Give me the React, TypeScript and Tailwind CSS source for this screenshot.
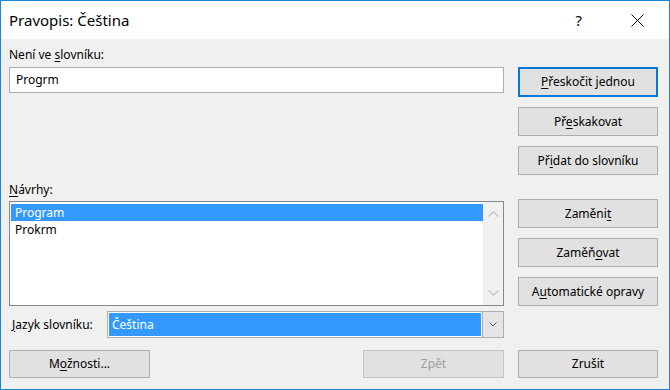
import React from "react";

function Btn({
  children,
  className = "",
  def = false,
  disabled = false,
}: {
  children: React.ReactNode;
  className?: string;
  def?: boolean;
  disabled?: boolean;
}) {
  return (
    <div
      className={
        "flex items-center justify-center bg-[#e1e1e1] " +
        (def
          ? "border-2 border-[#0078d7] "
          : disabled
          ? "border border-[#c6c6c6] text-[#a0a0a0] "
          : "border border-[#adadad] ") +
        className
      }
    >
      {children}
    </div>
  );
}

function U({ children }: { children: React.ReactNode }) {
  return <span className="underline underline-offset-[2px]">{children}</span>;
}

export default function App() {
  return (
    <div className="w-[670px] h-[390px] border border-[#1b86d8] bg-[#f0f0f0] flex flex-col text-[12px] text-black font-['Noto_Sans',sans-serif] overflow-hidden">
      {/* title bar */}
      <div className="h-[38px] bg-white flex items-center pl-[8px] shrink-0">
        <span className="text-[15px] text-black">Pravopis: Čeština</span>
        <span className="ml-auto text-[15px] text-black mr-[49px]">?</span>
        <svg width="13" height="13" viewBox="0 0 13 13" className="mr-[25px]">
          <path d="M0.5 0.5 L12.5 12.5 M12.5 0.5 L0.5 12.5" stroke="#000" strokeWidth="1" fill="none" />
        </svg>
      </div>

      {/* content */}
      <div className="flex flex-1 pl-[8px] pr-[11px] pb-[11px]">
        {/* left column */}
        <div className="w-[495px] flex flex-col">
          <div className="mt-[8px] h-[16px] leading-[16px]">
            Není ve <U>s</U>lovníku:
          </div>
          <div className="mt-[4px] h-[26px] bg-white border border-[#abadb3] flex items-center pl-[6px]">
            Progrm
          </div>
          <div className="mt-[89px] h-[16px] leading-[16px]">
            <U>N</U>ávrhy:
          </div>
          <div className="mt-[3px] h-[105px] bg-white border border-[#828790] flex">
            <div className="flex-1 flex flex-col pt-[2px] pl-[1px]">
              <div className="h-[17px] leading-[17px] bg-[#3399ff] text-white pl-[4px]">Program</div>
              <div className="h-[17px] leading-[17px] pl-[4px]">Prokrm</div>
            </div>
            <div className="w-[20px] bg-[#f0f0f0] flex flex-col items-center justify-between py-[9px]">
              <svg width="11" height="6" viewBox="0 0 11 6">
                <path d="M0.5 5.5 L5.5 0.8 L10.5 5.5" stroke="#c2c2c2" strokeWidth="1.3" fill="none" />
              </svg>
              <svg width="11" height="6" viewBox="0 0 11 6">
                <path d="M0.5 0.5 L5.5 5.2 L10.5 0.5" stroke="#c2c2c2" strokeWidth="1.3" fill="none" />
              </svg>
            </div>
          </div>
          <div className="mt-[5px] h-[27px] flex items-center">
            <div className="w-[98px] pl-[3px]">
              <U>J</U>azyk slovníku:
            </div>
            <div className="flex-1 h-full bg-white border border-[#adadad] flex">
              <div className="flex-1 m-[1px] bg-[#3399ff] text-white flex items-center pl-[3px]">Čeština</div>
              <div className="w-[21px] bg-[#e5e5e5] border-l border-[#adadad] flex items-center justify-center">
                <svg width="8" height="5" viewBox="0 0 8 5">
                  <path d="M0.5 0.5 L4 4 L7.5 0.5" stroke="#555" strokeWidth="1" fill="none" />
                </svg>
              </div>
            </div>
          </div>
          <div className="mt-auto h-[28px] flex justify-between">
            <Btn className="w-[141px]">
              <span>
                M<U>o</U>žnosti...
              </span>
            </Btn>
            <Btn className="w-[141px]" disabled>
              Zpět
            </Btn>
          </div>
        </div>

        {/* right column */}
        <div className="ml-[14px] w-[140px] flex flex-col">
          <Btn def className="mt-[28px] h-[30px]">
            <span>
              <U>P</U>řeskočit jednou
            </span>
          </Btn>
          <Btn className="mt-[10px] h-[29px]">
            <span>
              Př<U>e</U>skakovat
            </span>
          </Btn>
          <Btn className="mt-[10px] h-[29px]">
            <span>
              Př<U>i</U>dat do slovníku
            </span>
          </Btn>
          <Btn className="mt-[24px] h-[29px]">
            <span>
              Zaměni<U>t</U>
            </span>
          </Btn>
          <Btn className="mt-[10px] h-[29px]">
            <span>
              Zaměň<U>o</U>vat
            </span>
          </Btn>
          <Btn className="mt-[10px] h-[29px]">
            <span>
              A<U>u</U>tomatické opravy
            </span>
          </Btn>
          <Btn className="mt-auto h-[28px]">Zrušit</Btn>
        </div>
      </div>
    </div>
  );
}
